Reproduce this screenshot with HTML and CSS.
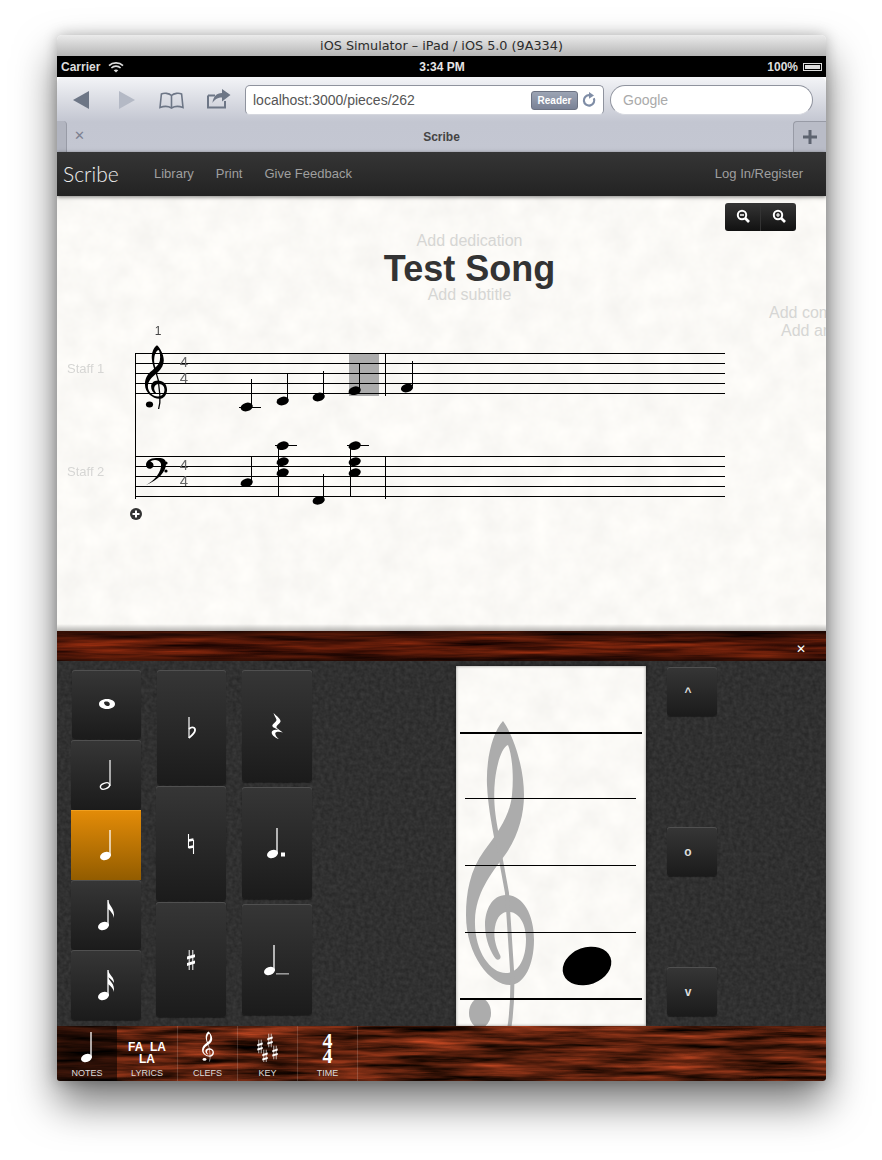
FILE: index.html
```html
<!DOCTYPE html>
<html>
<head>
    <title>iOS Simulator - Scribe</title>
    <link rel="stylesheet" href="styles.css">
</head>
<body>
    <svg class="defs" width="0" height="0">
        <defs>
            <filter id="woodDark" x="0" y="0" width="100%" height="100%" color-interpolation-filters="sRGB">
                <feTurbulence type="fractalNoise" baseFrequency="0.008 0.16" numOctaves="4" seed="7"/>
                <feColorMatrix type="matrix" values="0.9 0 0 0 -0.12  0.3 0 0 0 -0.06  0.1 0 0 0 -0.02  0 0 0 0 1"/>
            </filter>
            <filter id="woodLight" x="0" y="0" width="100%" height="100%" color-interpolation-filters="sRGB">
                <feTurbulence type="fractalNoise" baseFrequency="0.012 0.16" numOctaves="4" seed="12"/>
                <feColorMatrix type="matrix" values="1 0 0 0 -0.16  0.38 0 0 0 -0.07  0.2 0 0 0 -0.05  0 0 0 0 1"/>
            </filter>
            <filter id="leather" x="0" y="0" width="100%" height="100%" color-interpolation-filters="sRGB">
                <feTurbulence type="fractalNoise" baseFrequency="0.25" numOctaves="3" seed="3"/>
                <feColorMatrix type="matrix" values="0.1 0 0 0 0.14  0.1 0 0 0 0.14  0.1 0 0 0 0.14  0 0 0 0 1"/>
            </filter>
            <filter id="paper" x="0" y="0" width="100%" height="100%" color-interpolation-filters="sRGB">
                <feTurbulence type="fractalNoise" baseFrequency="0.04" numOctaves="4" seed="9"/>
                <feColorMatrix type="matrix" values="0.05 0 0 0 0.958  0.05 0 0 0 0.953  0.05 0 0 0 0.94  0 0 0 0 1"/>
            </filter>

            <symbol id="clef" viewBox="0 0 80 325" preserveAspectRatio="none">
                <path d="M43 6C32 18 26 45 27 70C28 90 31 105 34 122L39 120C35 100 33 85 35 65C37 48 42 32 48 30C52 40 54 60 52 80C50 100 38 118 24 136C10 155 6 178 6 200C6 240 30 270 50 270C64 270 74 250 74 225C74 198 62 180 46 180C32 180 25 195 25 210C25 225 31 238 36 244C38 246 42 244 40 240C36 232 33 222 35 212C37 200 44 196 50 197C60 198 66 210 66 224C66 245 58 258 46 258C30 258 14 235 15 205C16 178 30 160 45 140C58 122 64 100 64 80C64 50 52 18 43 6Z"/>
                <path d="M36 118L47 178L52 255C53 280 52 300 48 320" fill="none" stroke="currentColor" stroke-width="4"/>
                <ellipse cx="20" cy="298" rx="11" ry="15"/>
            </symbol>
            <symbol id="sharp" viewBox="0 0 10 22">
                <path d="M3.2 1V21M6.8 1V21" stroke="currentColor" stroke-width="1" fill="none"/>
                <path d="M1 7.6L9 5.2V8.2L1 10.6ZM1 14L9 11.6V14.6L1 17Z"/>
            </symbol>
            <symbol id="quarter" viewBox="0 0 24 32">
                <path d="M16 1V27" stroke="currentColor" stroke-width="1.3" fill="none"/>
                <ellipse cx="11.5" cy="27" rx="5.6" ry="3.9" transform="rotate(-20 11.5 27)"/>
            </symbol>
        </defs>
    </svg>

    <div class="window">
        <div class="titlebar">iOS Simulator – iPad / iOS 5.0 (9A334)</div>

        <div class="statusbar">
            <div class="status-left">
                <span>Carrier</span>
                <svg width="16" height="12" viewBox="0 0 16 12" fill="none" stroke="#ddd" stroke-width="1.7">
                    <path d="M1 4.6C4.8 1 11.2 1 15 4.6"/>
                    <path d="M3.4 7C6 4.6 10 4.6 12.6 7"/>
                    <path d="M8 11.4L5.7 9.2C7 8.2 9 8.2 10.3 9.2Z" fill="#ddd" stroke="none"/>
                </svg>
            </div>
            <div class="status-time">3:34 PM</div>
            <div class="status-right">
                <span>100%</span>
                <span class="battery"></span>
            </div>
        </div>

        <div class="chrome">
            <div class="toolbar">
                <svg class="tool back" width="16" height="18" viewBox="0 0 16 18"><path d="M0 9L16 0V18Z" fill="#6d7686"/></svg>
                <svg class="tool forward" width="16" height="18" viewBox="0 0 16 18"><path d="M16 9L0 0V18Z" fill="#b4b9c5"/></svg>
                <svg class="tool book" width="25" height="17" viewBox="0 0 25 17" fill="none" stroke="#6d7686" stroke-width="1.6">
                    <path d="M12.5 3.5C10 1 5 .8 2.4 2L1 15.5C4.5 14.2 9.5 14.2 12.5 16C15.5 14.2 20.5 14.2 24 15.5L22.6 2C20 .8 15 1 12.5 3.5V16"/>
                </svg>
                <svg class="tool share" width="24" height="20" viewBox="0 0 24 20">
                    <path d="M1 6.5H8M18 12V18.5H1V6.5" fill="none" stroke="#6d7686" stroke-width="2"/>
                    <path d="M15 0L23.5 6L15 12.5V8.5C11 8.5 8 10 5.5 14C6 8 9.5 4 15 4Z" fill="#6d7686"/>
                </svg>
                <div class="urlbar">
                    <span class="url">localhost:3000/pieces/262</span>
                    <span class="reader">Reader</span>
                    <svg width="15" height="16" viewBox="0 0 15 16" fill="none">
                        <path d="M11.8 6.2A5.2 5.2 0 1 1 7.5 3.2" stroke="#7f8da6" stroke-width="2.2"/>
                        <path d="M7 0L12 3.4L7 6.8Z" fill="#7f8da6"/>
                    </svg>
                </div>
                <div class="searchbar">Google</div>
            </div>
            <div class="tabbar">
                <span class="tab-stub"></span>
                <span class="tab-close">✕</span>
                <span class="tab-title">Scribe</span>
                <span class="tab-plus">
                    <svg width="14" height="14" viewBox="0 0 14 14"><path d="M5.5 0H8.5V5.5H14V8.5H8.5V14H5.5V8.5H0V5.5H5.5Z" fill="#5e6470"/></svg>
                </span>
            </div>
        </div>

        <div class="navbar">
            <span class="brand">Scribe</span>
            <a class="nav-link">Library</a>
            <a class="nav-link">Print</a>
            <a class="nav-link">Give Feedback</a>
            <a class="nav-link nav-login">Log In/Register</a>
        </div>

        <div class="page">
            <svg class="texture" width="100%" height="100%"><rect width="100%" height="100%" filter="url(#paper)"/></svg>

            <div class="zoom-buttons">
                <div class="zoom-btn">
                    <svg width="14" height="14" viewBox="0 0 14 14" fill="none" stroke="#fff">
                        <circle cx="6" cy="6" r="4.2" stroke-width="2"/>
                        <path d="M9 9L13 13" stroke-width="2.6"/>
                        <path d="M4 6H8" stroke-width="1.4"/>
                    </svg>
                </div>
                <div class="zoom-btn">
                    <svg width="14" height="14" viewBox="0 0 14 14" fill="none" stroke="#fff">
                        <circle cx="6" cy="6" r="4.2" stroke-width="2"/>
                        <path d="M9 9L13 13" stroke-width="2.6"/>
                        <path d="M4 6H8M6 4V8" stroke-width="1.2"/>
                    </svg>
                </div>
            </div>

            <div class="titles">
                <div class="add-text">Add dedication</div>
                <div class="song-title">Test Song</div>
                <div class="add-text">Add subtitle</div>
            </div>
            <div class="add-text credit composer">Add composer</div>
            <div class="add-text credit arranger">Add arranger</div>

            <svg class="score" width="769" height="435" viewBox="57 196 769 435">
                <g class="score-text">
                    <text x="158" y="335" class="measure-no" text-anchor="middle">1</text>
                    <text x="67" y="373" class="staff-label">Staff 1</text>
                    <text x="67" y="476" class="staff-label">Staff 2</text>
                </g>

                <rect x="349" y="353" width="30" height="43" fill="#acacac"/>

                <g stroke="#000" stroke-width="1" fill="none">
                    <path d="M135 353.5H725M135 363.5H725M135 373.5H725M135 383.5H725M135 393.5H725"/>
                    <path d="M135 456.5H725M135 466.5H725M135 476.5H725M135 486.5H725M135 496.5H725"/>
                    <path d="M135.5 353V499"/>
                    <path d="M385.5 353V396M385.5 456V499"/>
                    <!-- stems -->
                    <path d="M251.5 379V405M287.5 374V399M323.5 371V395M359.5 363V389M412.5 361V386"/>
                    <path d="M251.5 456V481M278.5 445V497M323.5 474V498M350.5 445V497"/>
                    <!-- ledger lines -->
                    <path d="M239 407.5H261M275 445.5H297M347 445.5H369"/>
                </g>

                <g fill="#000">
                    <ellipse cx="246.7" cy="407" rx="6.2" ry="4.2" transform="rotate(-15 246.7 407)"/>
                    <ellipse cx="282.7" cy="401" rx="6.2" ry="4.2" transform="rotate(-15 282.7 401)"/>
                    <ellipse cx="318.7" cy="397" rx="6.2" ry="4.2" transform="rotate(-15 318.7 397)"/>
                    <ellipse cx="354.7" cy="390.7" rx="6.2" ry="4.2" transform="rotate(-15 354.7 390.7)"/>
                    <ellipse cx="407" cy="388" rx="6.2" ry="4.2" transform="rotate(-15 407 388)"/>

                    <ellipse cx="246.7" cy="482.7" rx="6.2" ry="4.2" transform="rotate(-15 246.7 482.7)"/>
                    <ellipse cx="282.7" cy="445.7" rx="6.2" ry="4.2" transform="rotate(-15 282.7 445.7)"/>
                    <ellipse cx="282.7" cy="461.7" rx="6.2" ry="4.2" transform="rotate(-15 282.7 461.7)"/>
                    <ellipse cx="282.7" cy="472.7" rx="6.2" ry="4.2" transform="rotate(-15 282.7 472.7)"/>
                    <ellipse cx="318.7" cy="500.3" rx="6.2" ry="4.2" transform="rotate(-15 318.7 500.3)"/>
                    <ellipse cx="354.7" cy="445.7" rx="6.2" ry="4.2" transform="rotate(-15 354.7 445.7)"/>
                    <ellipse cx="354.7" cy="461.7" rx="6.2" ry="4.2" transform="rotate(-15 354.7 461.7)"/>
                    <ellipse cx="354.7" cy="472.7" rx="6.2" ry="4.2" transform="rotate(-15 354.7 472.7)"/>
                </g>

                <use href="#clef" x="143" y="344" width="26" height="66" color="#000"/>

                <!-- bass clef -->
                <path d="M146 485C158 480 166 472 166 464C166 458 162 458 156 458C150 458 146 461 146 465C146 469 151 470 153 467C155 464 151 461 150 462C152 459 160 459 161 464C162 472 154 481 146 485Z"/>
                <circle cx="166" cy="463" r="1.6"/>
                <circle cx="166" cy="471" r="1.6"/>

                <g class="time-sig" text-anchor="middle">
                    <text x="184" y="367">4</text>
                    <text x="184" y="383">4</text>
                    <text x="184" y="470">4</text>
                    <text x="184" y="486">4</text>
                </g>

                <circle cx="136" cy="514" r="6" fill="#333"/>
                <path d="M132.5 514H139.5M136 510.5V517.5" stroke="#fff" stroke-width="2"/>
            </svg>
        </div>

        <div class="woodbar">
            <svg class="texture" width="100%" height="100%"><rect width="100%" height="100%" filter="url(#woodDark)"/></svg>
            <span class="panel-close">✕</span>
        </div>

        <div class="panel">
            <svg class="texture" width="100%" height="100%"><rect width="100%" height="100%" filter="url(#leather)"/></svg>

            <div class="col col-durations">
                <div class="btn">
                    <svg class="glyph" width="18" height="12" viewBox="0 0 18 12"><path fill-rule="evenodd" d="M9 1C14 1 17 3.4 17 6S14 11 9 11S1 8.6 1 6S4 1 9 1ZM6 4.5C6.3 7 8.5 8.5 11 7.7C12.3 7 12 4.8 10.5 4C8.5 3.2 6.5 3.4 6 4.5Z" fill="#fff"/></svg>
                </div>
                <div class="btn">
                    <svg class="glyph" width="24" height="32" viewBox="0 0 24 32" color="#fff">
                        <path d="M16 1V27" stroke="#fff" stroke-width="1.2"/>
                        <ellipse cx="11" cy="27" rx="4.8" ry="2.8" transform="rotate(-22 11 27)" fill="none" stroke="#fff" stroke-width="1.3"/>
                    </svg>
                </div>
                <div class="btn btn-active">
                    <svg class="glyph" width="24" height="32" fill="#fff" color="#fff"><use href="#quarter"/></svg>
                </div>
                <div class="btn">
                    <svg class="glyph" width="24" height="32" viewBox="0 0 24 32" fill="#fff">
                        <path d="M14 1V27" stroke="#fff" stroke-width="1.3"/>
                        <path d="M14 1C15 7 21 9 20 19C19.6 16 17 12 14 10Z"/>
                        <ellipse cx="9.5" cy="27" rx="5.6" ry="3.9" transform="rotate(-20 9.5 27)"/>
                    </svg>
                </div>
                <div class="btn">
                    <svg class="glyph" width="24" height="32" viewBox="0 0 24 32" fill="#fff">
                        <path d="M14 1V27" stroke="#fff" stroke-width="1.3"/>
                        <path d="M14 1C15 6 20.5 8 20 14C19 12 17 10 14 8Z"/>
                        <path d="M14 8C15 12 21 14 20 23C19.6 20 17 17 14 15Z"/>
                        <ellipse cx="9.5" cy="27" rx="5.6" ry="3.9" transform="rotate(-20 9.5 27)"/>
                    </svg>
                </div>
            </div>

            <div class="col col-accidentals">
                <div class="btn">
                    <svg class="glyph" width="10" height="22" viewBox="0 0 10 22" fill="none" stroke="#fff">
                        <path d="M2 0V21" stroke-width="1.2"/>
                        <path d="M2 12C5 9 8.5 10.5 8 13.5C7.5 16.5 4 19 2 21" stroke-width="1.8"/>
                    </svg>
                </div>
                <div class="btn">
                    <svg class="glyph" width="8" height="20" viewBox="0 0 8 20" fill="none" stroke="#fff">
                        <path d="M1.5 0V14M6.5 6V20" stroke-width="1.1"/>
                        <path d="M1.5 6.5L6.5 5.5M1.5 13.5L6.5 12.5" stroke-width="2.4"/>
                    </svg>
                </div>
                <div class="btn">
                    <svg class="glyph" width="10" height="22" fill="#fff" color="#fff"><use href="#sharp"/></svg>
                </div>
            </div>

            <div class="col col-extras">
                <div class="btn">
                    <svg class="glyph" width="14" height="26" viewBox="0 0 12 24" preserveAspectRatio="none" fill="#fff">
                        <path d="M3 0C6 3 9.5 6 9 8C8.2 10 5.6 11 5.5 13C5.5 14.5 9 16 11 18C8 17 4.5 17 4.5 19C4.5 21 6 22.5 7.5 24C4 22.5 1 20 1.5 17.5C2 15.5 5 15.5 7 15.5C5 14 1.8 13.5 2 11.5C2.5 9.5 6 8 5.5 6C5 4.5 3.5 2 3 0Z"/>
                    </svg>
                </div>
                <div class="btn">
                    <svg class="glyph" width="24" height="32" viewBox="0 0 24 32" fill="#fff">
                        <path d="M12 1V27" stroke="#fff" stroke-width="1.3"/>
                        <ellipse cx="7.5" cy="27" rx="5.6" ry="3.9" transform="rotate(-20 7.5 27)"/>
                        <rect x="16" y="25.5" width="4" height="4"/>
                    </svg>
                </div>
                <div class="btn">
                    <svg class="glyph glyph-tied" width="30" height="32" viewBox="0 0 30 32" fill="#fff">
                        <path d="M12 1V27" stroke="#fff" stroke-width="1.3"/>
                        <ellipse cx="7.5" cy="27" rx="5.6" ry="3.9" transform="rotate(-20 7.5 27)"/>
                        <rect x="14" y="29" width="13" height="1.6" fill="#999"/>
                    </svg>
                </div>
            </div>

            <div class="staff-card">
                <svg class="texture" width="100%" height="100%"><rect width="100%" height="100%" filter="url(#paper)"/></svg>
                <svg class="card-art" width="190" height="360" viewBox="0 0 190 360">
                    <use href="#clef" x="4" y="49" width="80" height="325" fill="#acacac" color="#acacac"/>
                    <path d="M4 67H186M4 333H186" stroke="#000" stroke-width="2"/>
                    <path d="M9 132.5H180M9 199.5H180M9 266.5H180" stroke="#000" stroke-width="1"/>
                    <ellipse cx="131" cy="300" rx="25" ry="18.5" transform="rotate(-20 131 300)"/>
                </svg>
            </div>

            <div class="col col-pitch">
                <div class="btn">^</div>
                <div class="btn">o</div>
                <div class="btn">v</div>
            </div>
        </div>

        <div class="tabs">
            <svg class="texture" width="100%" height="100%"><rect width="100%" height="100%" filter="url(#woodLight)"/></svg>
            <div class="tab-item tab-active">
                <div class="tab-icon"><svg width="24" height="32" fill="#fff" color="#fff"><use href="#quarter"/></svg></div>
                <div class="tab-label">NOTES</div>
            </div>
            <div class="tab-item">
                <div class="tab-icon lyrics">FA&nbsp;&nbsp;LA<br>LA</div>
                <div class="tab-label">LYRICS</div>
            </div>
            <div class="tab-item">
                <div class="tab-icon"><svg width="14" height="31" fill="#fff" color="#fff"><use href="#clef" width="14" height="31"/></svg></div>
                <div class="tab-label">CLEFS</div>
            </div>
            <div class="tab-item">
                <div class="tab-icon">
                    <svg width="26" height="30" viewBox="0 0 26 30" fill="#fff" color="#fff">
                        <use href="#sharp" x="1.5" y="7" width="7" height="15"/>
                        <use href="#sharp" x="11.5" y="1" width="7" height="15"/>
                        <use href="#sharp" x="6.5" y="17" width="7" height="15"/>
                        <use href="#sharp" x="16.5" y="13" width="7" height="15"/>
                    </svg>
                </div>
                <div class="tab-label">KEY</div>
            </div>
            <div class="tab-item">
                <div class="tab-icon time-icon">4<br>4</div>
                <div class="tab-label">TIME</div>
            </div>
        </div>
    </div>
</body>
</html>
```

FILE: styles.css
```css
html, body {
    margin: 0;
    padding: 0;
}

body {
    width: 882px;
    height: 1160px;
    overflow: hidden;
    background-color: #fff;
    font-family: "Liberation Sans", Arial, sans-serif;
    padding-top: 35px;
    box-sizing: border-box;
}

.defs {
    position: absolute;
}

.window {
    width: 769px;
    height: 1046px;
    margin-left: 57px;
    border-radius: 5px 5px 3px 3px;
    overflow: hidden;
    display: flex;
    flex-direction: column;
    box-shadow: 0 22px 42px rgba(0, 0, 0, 0.55), 0 0 14px rgba(0, 0, 0, 0.25);
}

.titlebar {
    height: 21px;
    line-height: 22px;
    text-align: center;
    font-family: "DejaVu Sans", sans-serif;
    font-size: 12.8px;
    color: #2c2c2c;
    background: linear-gradient(#ebebeb, #b6b6b6);
    flex: none;
}

.statusbar {
    height: 21px;
    background-color: #000;
    color: #ddd;
    font-size: 12px;
    font-weight: bold;
    display: flex;
    align-items: center;
    justify-content: space-between;
    padding: 0 3px 0 4px;
    flex: none;
}

.status-left {
    display: flex;
    align-items: center;
    gap: 8px;
    width: 150px;
}

.status-right {
    display: flex;
    align-items: center;
    justify-content: flex-end;
    gap: 5px;
    width: 150px;
}

.status-time {
    color: #e6e6e6;
}

.battery {
    display: block;
    width: 17px;
    height: 6px;
    border: 1px solid #ddd;
    background-color: #ddd;
    box-shadow: inset 0 0 0 1px #000;
    margin-right: 1px;
}

.chrome {
    height: 75px;
    background: linear-gradient(#f3f4f7, #c3c6d1 60%, #c4c7d2);
    border-radius: 6px 6px 0 0;
    flex: none;
}

.toolbar {
    height: 45px;
    display: flex;
    align-items: center;
    padding-left: 16px;
    box-sizing: border-box;
    padding-top: 1px;
}

.tool {
    flex: none;
}

.forward {
    margin-left: 30px;
}

.book {
    margin-left: 24px;
}

.share {
    margin-left: 23px;
    margin-top: -3px;
}

.urlbar {
    width: 359px;
    height: 30px;
    margin-left: 14px;
    box-sizing: border-box;
    background-color: #fff;
    border: 1px solid #8f939e;
    border-bottom-color: #d5d7de;
    border-radius: 5px;
    display: flex;
    align-items: center;
    padding: 0 6px 0 7px;
}

.url {
    flex: 1;
    font-size: 14px;
    color: #555;
}

.reader {
    width: 47px;
    height: 19px;
    line-height: 18px;
    margin-right: 4px;
    box-sizing: border-box;
    text-align: center;
    font-size: 10px;
    font-weight: bold;
    color: #fff;
    background: linear-gradient(#9ca4b4, #7a8296);
    border: 1px solid #6c7282;
    border-radius: 3px;
}

.searchbar {
    width: 203px;
    height: 30px;
    margin-left: 6px;
    box-sizing: border-box;
    line-height: 28px;
    padding-left: 12px;
    font-size: 14px;
    color: #aaa;
    background-color: #fff;
    border: 1px solid #8f939e;
    border-bottom-color: #d5d7de;
    border-radius: 15px;
}

.tabbar {
    height: 30px;
    position: relative;
    display: flex;
    align-items: center;
    justify-content: center;
}

.tab-stub {
    position: absolute;
    left: 0;
    top: -1px;
    bottom: 0;
    width: 9px;
    background-color: #b2b5c0;
    border-top-right-radius: 4px;
    border-right: 1px solid #989ba6;
}

.tab-close {
    position: absolute;
    left: 17px;
    top: 6px;
    font-size: 13px;
    color: #7c8090;
}

.tab-title {
    font-size: 12px;
    font-weight: bold;
    color: #444;
}

.tab-plus {
    position: absolute;
    right: 0;
    top: -1px;
    bottom: 0;
    width: 33px;
    box-sizing: border-box;
    display: flex;
    align-items: center;
    justify-content: center;
    background-color: #b9bcc7;
    border-left: 1px solid #989ba6;
    border-top: 1px solid #989ba6;
    border-top-left-radius: 4px;
}

.navbar {
    height: 44px;
    box-sizing: border-box;
    padding-bottom: 2px;
    background: linear-gradient(#353535, #232323);
    color: #9f9f9f;
    font-size: 13px;
    display: flex;
    align-items: center;
    position: relative;
    z-index: 2;
    box-shadow: 0 1px 4px rgba(0, 0, 0, 0.5);
    flex: none;
}

.brand {
    width: 91px;
    padding-left: 6px;
    box-sizing: border-box;
    font-family: "Lato", sans-serif;
    font-weight: 300;
    font-size: 21px;
    color: #eee;
    margin-right: 6px;
}

.nav-link {
    margin-right: 22px;
}

.nav-login {
    margin-left: auto;
    margin-right: 23px;
}

.page {
    height: 435px;
    position: relative;
    overflow: hidden;
    flex: none;
}

.page::after {
    content: "";
    position: absolute;
    left: 0;
    right: 0;
    bottom: 0;
    height: 7px;
    background: linear-gradient(rgba(0, 0, 0, 0), rgba(0, 0, 0, 0.28));
}

.texture {
    position: absolute;
    top: 0;
    left: 0;
}

.zoom-buttons {
    position: absolute;
    top: 7px;
    left: 668px;
    width: 71px;
    height: 28px;
    display: flex;
    border-radius: 3px;
    background: linear-gradient(#353535, #111);
    z-index: 1;
}

.zoom-btn {
    flex: 1;
    display: flex;
    align-items: center;
    justify-content: center;
    padding-bottom: 2px;
}

.zoom-btn + .zoom-btn {
    border-left: 1px solid #333;
}

.titles {
    position: relative;
    margin-left: 56px;
    padding-top: 36px;
    text-align: center;
    z-index: 1;
}

.add-text {
    font-size: 16px;
    line-height: 18px;
    color: #d6d6d4;
}

.titles .add-text:last-child {
    line-height: 16px;
}

.song-title {
    font-size: 36px;
    font-weight: bold;
    line-height: 36px;
    color: #333;
    margin-top: 1px;
}

.credit {
    position: absolute;
    white-space: nowrap;
    z-index: 1;
}

.composer {
    top: 108px;
    left: 712px;
}

.arranger {
    top: 126px;
    left: 724px;
}

.score {
    position: absolute;
    top: 0;
    left: 0;
}

.score-text {
    opacity: 0.99;
}

.measure-no {
    font-size: 12px;
    fill: #444;
}

.staff-label {
    font-size: 13px;
    fill: #d6d6d4;
}

.time-sig {
    font-size: 15px;
    fill: #666;
    opacity: 0.99;
}

.woodbar {
    height: 30px;
    position: relative;
    overflow: hidden;
    flex: none;
}

.woodbar::after {
    content: "";
    position: absolute;
    top: 0;
    left: 0;
    right: 0;
    bottom: 0;
    background: linear-gradient(rgba(0, 0, 0, 0.5), rgba(0, 0, 0, 0) 40%, rgba(0, 0, 0, 0) 70%, rgba(0, 0, 0, 0.45));
}

.panel-close {
    position: absolute;
    right: 20px;
    top: 11px;
    font-size: 12px;
    line-height: 14px;
    color: #fff;
    z-index: 1;
}

.panel {
    height: 365px;
    position: relative;
    overflow: hidden;
    display: flex;
    align-items: flex-start;
    padding-left: 14px;
    flex: none;
}

.col {
    position: relative;
    width: 70px;
    margin-top: 9px;
    display: flex;
    flex-direction: column;
    flex: none;
}

.btn {
    display: flex;
    align-items: center;
    justify-content: center;
    box-sizing: border-box;
    border-radius: 3px;
    background: linear-gradient(#363636, #1b1b1b);
    box-shadow: inset 0 1px 0 #505050, 0 1px 1px rgba(0, 0, 0, 0.4);
}

.btn-active {
    background: linear-gradient(#e48c08, #925c00);
    box-shadow: inset 0 1px 0 #f0a020;
    border-radius: 0;
}

.col-durations .btn {
    height: 70px;
}

.col-durations .btn:first-child {
    height: 69px;
    margin: 0 0 1px 1px;
    width: 69px;
}

.col-durations .btn:first-child .glyph {
    margin: -2px 0 0 0;
}

.col-accidentals {
    margin-left: 15px;
}

.col-accidentals .btn:nth-child(1) {
    height: 115px;
    margin: 0 0 1px 1px;
}

.col-accidentals .btn:nth-child(2) {
    height: 115px;
}

.col-accidentals .btn:nth-child(3) {
    height: 115px;
    margin-top: 1px;
}

.col-extras {
    margin-left: 16px;
}

.col-extras .btn:nth-child(1) {
    height: 112px;
}

.col-extras .btn:nth-child(2) {
    height: 112px;
    margin-top: 5px;
}

.col-extras .btn:nth-child(3) {
    height: 111px;
    margin-top: 5px;
}

.staff-card {
    position: relative;
    width: 190px;
    height: 360px;
    margin: 5px 0 0 144px;
    overflow: hidden;
    flex: none;
    box-shadow: 0 0 4px rgba(0, 0, 0, 0.6);
}

.staff-card::after {
    content: "";
    position: absolute;
    top: 0;
    left: 0;
    right: 0;
    bottom: 0;
    box-shadow: inset 0 0 3px rgba(0, 0, 0, 0.45);
}

.card-art {
    position: absolute;
    top: 0;
    left: 0;
}

.col-pitch {
    width: 50px;
    margin: 6px 0 0 21px;
}

.col-pitch .btn {
    height: 49px;
    font-size: 12px;
    font-weight: bold;
    color: #ddd;
    padding-right: 8px;
}

.col-pitch .btn:nth-child(2) {
    margin-top: 111px;
}

.col-pitch .btn:nth-child(3) {
    margin-top: 91px;
}

.tabs {
    height: 55px;
    position: relative;
    overflow: hidden;
    display: flex;
    flex: none;
    box-shadow: inset 0 1px 2px rgba(0, 0, 0, 0.6);
}

.tab-item {
    position: relative;
    width: 60px;
    height: 55px;
    box-sizing: border-box;
    border-right: 1px solid rgba(255, 255, 255, 0.16);
    display: flex;
    flex-direction: column;
    align-items: center;
}

.tab-active {
    background: rgba(0, 0, 0, 0.55);
    border-right: 0;
}

.tab-active + .tab-item {
    width: 61px;
}

.tab-icon {
    height: 41px;
    display: flex;
    align-items: center;
    justify-content: center;
    color: #fff;
}

.lyrics {
    display: block;
    padding-top: 15px;
    height: 26px;
    text-align: center;
    font-size: 12px;
    font-weight: bold;
    line-height: 12px;
}

.time-icon {
    display: block;
    padding-top: 8px;
    height: 33px;
    text-align: center;
    font-family: "Liberation Serif", serif;
    font-size: 20px;
    font-weight: bold;
    line-height: 15px;
}

.tab-label {
    font-size: 9px;
    line-height: 12px;
    color: #ddd;
}
```
